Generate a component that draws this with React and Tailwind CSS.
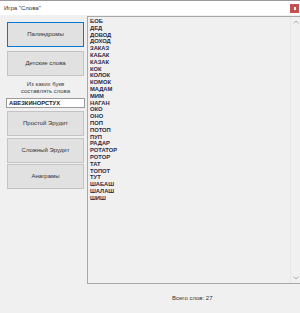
import React from "react";

const words = [
  "БОБ", "ДЕД", "ДОВОД", "ДОХОД", "ЗАКАЗ", "КАБАК", "КАЗАК", "КОК", "КОЛОК",
  "КОМОК", "МАДАМ", "МИМ", "НАГАН", "ОКО", "ОНО", "ПОП", "ПОТОП", "ПУП",
  "РАДАР", "РОТАТОР", "РОТОР", "ТАТ", "ТОПОТ", "ТУТ", "ШАБАШ", "ШАЛАШ", "ШИШ",
];

const font = { fontFamily: "'Liberation Sans', Arial, sans-serif" };

function Btn({ children, focused, className = "" }) {
  return (
    <div
      className={
        "flex items-center justify-center w-[77px] h-[25px] bg-[#e1e1e1] text-[6px] text-[#333] border " +
        (focused ? "border-[#0078d7]" : "border-[#c4c4c4]") +
        " " +
        className
      }
    >
      {children}
    </div>
  );
}

export default function App() {
  return (
    <div
      className="w-[300px] h-[313px] bg-[#f0f0f0] flex flex-col overflow-hidden"
      style={font}
    >
      {/* title bar */}
      <div className="h-[15px] bg-white border-t border-[#9a9a9a] flex items-center justify-between shrink-0">
        <span className="pl-[4px] text-[6px] text-[#333]">Игра "Слова"</span>
        <div className="w-[9px] h-[9px] bg-[#c75050] flex items-center justify-center mr-[1px]">
          <span className="block w-[2px] h-[3px] bg-white" />
        </div>
      </div>

      {/* body */}
      <div className="flex h-[269px] pt-[1px] shrink-0">
        <div className="w-[87px] pl-[7px] pt-[6px] flex flex-col shrink-0">
          <Btn focused>Палиндромы</Btn>
          <Btn className="mt-[4px]">Детские слова</Btn>
          <div className="w-[77px] mt-[5px] text-center text-[6px] leading-[7px] text-[#444]">
            Из каких букв
            <br />
            составлять слова
          </div>
          <div className="w-[79px] -ml-[1px] h-[10px] mt-[3px] bg-white border border-[#9a9a9a] flex items-center pl-[2px] text-[5.8px] font-bold text-[#222]">
            АВЕЗКИНОРСТУХ
          </div>
          <Btn className="mt-[3px]">Простой Эрудит</Btn>
          <Btn className="mt-[2px]">Сложный Эрудит</Btn>
          <Btn className="mt-[1px]">Анаграмы</Btn>
        </div>

        <div className="flex-1 flex border-l border-t border-b border-[#a8a8a8] bg-[#f0f0f0]">
          <div className="flex-1 pl-[2px] pt-[1px] flex flex-col">
            {words.map((w) => (
              <div key={w} className="h-[6.8px] leading-[6.8px] text-[5.8px] font-bold text-[#2a2a48]">
                {w}
              </div>
            ))}
          </div>
          <div className="w-[10px] bg-[#f0f0f0] border-l border-[#e6e6e6] flex flex-col items-center justify-between py-[3px]">
            <svg width="6" height="4" viewBox="0 0 6 4">
              <path d="M0.5 3.5 L3 1 L5.5 3.5" fill="none" stroke="#b0b0b0" strokeWidth="1" />
            </svg>
            <svg width="6" height="4" viewBox="0 0 6 4">
              <path d="M0.5 0.5 L3 3 L5.5 0.5" fill="none" stroke="#b0b0b0" strokeWidth="1" />
            </svg>
          </div>
        </div>
      </div>

      {/* footer */}
      <div className="pl-[172px] pt-[10px] text-[6px] text-[#333]">Всего слов: 27</div>
    </div>
  );
}
